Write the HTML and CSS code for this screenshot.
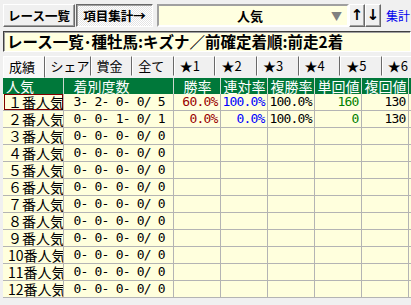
FILE: index.html
```html
<!DOCTYPE html>
<html lang="ja">
<head>
  <meta charset="UTF-8" />
  <title>項目集計 - 人気</title>
  <link rel="stylesheet" href="styles.css">
</head>
<body>

  <div class="toolbar">
    <button class="btn">レース一覧</button>
    <button class="btn btn-on">項目集計→</button>
    <div class="combo">
      <span class="combo-text">人気</span>
      <span class="combo-arrow">▼</span>
    </div>
    <button class="btn btn-arrow">↑</button>
    <button class="btn btn-arrow">↓</button>
    <a class="link" href="#">集計</a>
  </div>

  <div class="titulo">レース一覧･種牡馬:キズナ／前確定着順:前走2着</div>

  <div class="tabs">
    <div class="tab tab-on">成績</div>
    <div class="tab">シェア</div>
    <div class="tab">賞金</div>
    <div class="tab">全て</div>
    <div class="tab">★1</div>
    <div class="tab">★2</div>
    <div class="tab">★3</div>
    <div class="tab">★4</div>
    <div class="tab">★5</div>
    <div class="tab">★6</div>
  </div>

  <div class="grade">
    <table>
      <colgroup>
        <col class="c-nome">
        <col class="c-dados">
        <col class="c-num">
        <col class="c-num">
        <col class="c-num">
        <col class="c-num">
        <col class="c-num">
        <col class="c-num">
      </colgroup>
      <thead>
        <tr>
          <th>人気</th>
          <th class="pad">着別度数</th>
          <th class="pad">勝率</th>
          <th>連対率</th>
          <th>複勝率</th>
          <th>単回値</th>
          <th>複回値</th>
          <th></th>
        </tr>
      </thead>
      <tbody id="tabela"></tbody>
    </table>
  </div>

  <script>
    const linhas = [
      { nome: '１番人気', dados: '3- 2- 0- 0/ 5', win: '60.0%', ren: '100.0%', fuku: '100.0%', tan: '160', fukuk: '130' },
      { nome: '２番人気', dados: '0- 0- 1- 0/ 1', win: '0.0%', ren: '0.0%', fuku: '100.0%', tan: '0', fukuk: '130' }
    ];
    const zen = ['３', '４', '５', '６', '７', '８', '９'];
    zen.forEach(n => linhas.push({ nome: n + '番人気', dados: '0- 0- 0- 0/ 0' }));
    ['10', '11', '12'].forEach(n => linhas.push({ nome: n + '番人気', dados: '0- 0- 0- 0/ 0' }));

    const tabela = document.getElementById('tabela');
    linhas.forEach((l, i) => {
      const tr = document.createElement('tr');
      tr.innerHTML = `
        <td class="nome"><span class="${i === 0 ? 'foco' : ''}">${l.nome}</span></td>
        <td class="dados">${l.dados}</td>
        <td class="num vermelho">${l.win || ''}</td>
        <td class="num azul">${l.ren || ''}</td>
        <td class="num">${l.fuku || ''}</td>
        <td class="num verde">${l.tan || ''}</td>
        <td class="num">${l.fukuk || ''}</td>
        <td></td>
      `;
      tabela.appendChild(tr);
    });
  </script>
</body>
</html>
```

FILE: styles.css
```css
body {
  margin: 0;
  width: 411px;
  height: 305px;
  overflow: hidden;
  background: #f0f0f0;
  font-family: "Noto Sans CJK JP", sans-serif;
  color: #000;
}

.toolbar {
  display: flex;
  align-items: center;
  height: 23px;
  padding: 4px 0 0 3px;
  white-space: nowrap;
}

.btn {
  height: 23px;
  width: 72px;
  padding: 0;
  font-family: "Noto Sans CJK JP", sans-serif;
  font-size: 12.5px;
  font-weight: bold;
  line-height: 19px;
  background: #f0f0f0;
  border: 1px solid;
  border-color: #fff #696969 #696969 #fff;
  box-shadow: inset -1px -1px #a0a0a0;
  white-space: nowrap;
}

.btn-on {
  width: 77px;
  margin-left: 1px;
  border-color: #696969 #fff #fff #696969;
  box-shadow: inset 1px 1px #a0a0a0;
  background: repeating-conic-gradient(#fff 0 25%, #e4e4e4 0 50%) 0 0 / 2px 2px;
}

.combo {
  display: flex;
  align-items: center;
  width: 188px;
  height: 19px;
  margin: 0 0 0 4px;
  background: #ffffe0;
  border: 2px solid;
  border-color: #a0a0a0 #fff #fff #a0a0a0;
}

.combo-text {
  flex: 1;
  text-align: center;
  font-size: 13px;
  font-weight: bold;
  padding-left: 10px;
}

.combo-arrow {
  color: #808080;
  font-size: 11px;
  margin-right: 5px;
}

.btn-arrow {
  width: 16px;
  font-size: 15px;
  font-family: "DejaVu Sans", sans-serif;
}

.link {
  margin-left: 5px;
  font-size: 12px;
  color: #0000ee;
  text-decoration: none;
}

.titulo {
  margin: 4px 0 0 3px;
  height: 19px;
  padding-left: 3px;
  background: #ffffe0;
  border: 1px solid;
  border-color: #404040 #fff #fff #404040;
  box-shadow: inset 1px 1px #a0a0a0;
  font-size: 15.5px;
  font-weight: bold;
  line-height: 19px;
  white-space: nowrap;
}

.tabs {
  display: flex;
  margin: 4px 0 0 3px;
  height: 22px;
  align-items: flex-end;
}

.tab {
  flex: 0 0 41.6px;
  box-sizing: border-box;
  height: 20px;
  font-size: 13px;
  line-height: 18px;
  padding-left: 5px;
  background: #f0f0f0;
  border: 1px solid;
  border-color: #fff #696969 transparent #fff;
  margin-bottom: 2px;
  white-space: nowrap;
}

.tab-on {
  height: 22px;
  margin-bottom: 0;
  background: #f8f8f8;
  line-height: 20px;
}

.grade {
  margin-left: 3px;
  overflow: hidden;
}

table {
  table-layout: fixed;
  border-collapse: collapse;
  width: 452px;
}

.c-nome { width: 60px; }
.c-dados { width: 110px; }
.c-num { width: 47px; }

th {
  height: 16px;
  padding: 0 0 0 3px;
  background: #00783a;
  color: #fff;
  font-size: 14px;
  font-weight: normal;
  text-align: left;
  line-height: 16px;
  border-left: 1px solid #cfd8d0;
  white-space: nowrap;
  overflow: hidden;
}

th:first-child {
  border-left: none;
}

th.pad {
  padding-left: 10px;
}

td {
  height: 16px;
  padding: 0 2px;
  background: #ffffdd;
  border: 1px solid #b4b4b4;
  font-size: 14px;
  line-height: 16px;
  white-space: nowrap;
  overflow: hidden;
}

tr:first-child td {
  border-top: none;
}

td:first-child {
  border-left: none;
}

.nome {
  padding: 0 0 0 1px;
}

.nome span {
  display: block;
  padding-left: 3px;
  border: 1px solid transparent;
  line-height: 14px;
}

.nome .foco {
  border-color: #800000;
}

.dados {
  padding-left: 10px;
  font-family: "DejaVu Sans Mono", monospace;
  font-size: 13px;
  letter-spacing: -0.8px;
  white-space: pre;
}

.num {
  text-align: right;
  font-family: "DejaVu Sans Mono", monospace;
  font-size: 13px;
  letter-spacing: -0.8px;
}

.vermelho { color: #990000; }
.azul { color: #0000ff; }
.verde { color: #008000; }
```
